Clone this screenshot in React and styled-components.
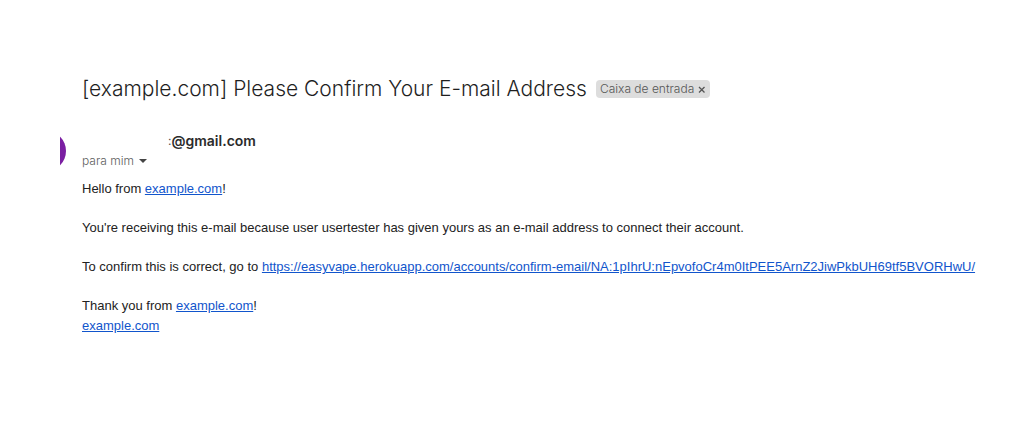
import React from "react";
import styled, { createGlobalStyle } from "styled-components";

const GlobalStyle = createGlobalStyle`
  * { box-sizing: border-box; }
  body { margin: 0; background: #fff; color: #222; font-family: "Liberation Sans", Arial, sans-serif; }
`;

const Message = styled.main`
  padding: 74px 24px 40px 60px;
`;

const Header = styled.header`
  display: flex;
  align-items: center;
  gap: 9px;
  padding-left: 22px;
`;

const Subject = styled.h1`
  margin: 0;
  font: 300 21px/30px Inter, sans-serif;
  color: #1f1f1f;
`;

const Label = styled.span`
  display: flex;
  align-items: center;
  gap: 3px;
  height: 18px;
  padding: 0 4px;
  border-radius: 4px;
  background: #ddd;
  color: #555;
  font: 300 12px/18px Inter, sans-serif;
`;

const RemoveButton = styled.button`
  display: flex;
  padding: 1px 0 0;
  border: 0;
  background: none;
  color: inherit;
`;

const SenderBlock = styled.section`
  display: flex;
  gap: 16px;
  margin-top: 27px;
`;

const Avatar = styled.div`
  width: 6px;
  height: 40px;
  overflow: hidden;
  display: flex;
  justify-content: flex-end;

  svg { flex: none; }
`;

const SenderInfo = styled.div`
  display: flex;
  flex-direction: column;
`;

const Sender = styled.strong`
  display: flex;
  padding-left: 86px;
  font: 600 14px/20px Inter, sans-serif;
  color: #2b2b2b;
`;

const Separator = styled.span`
  color: #555;
  font-size: 12px;
  font-weight: 400;
`;

const Recipient = styled.button`
  display: flex;
  align-items: center;
  gap: 5px;
  padding: 0;
  border: 0;
  background: none;
  color: #5e5e5e;
  font: 300 12px/20px Inter, sans-serif;
`;

const Body = styled.article`
  padding: 8px 0 0 22px;
  font-size: 13px;
  line-height: 20px;
`;

const Paragraph = styled.p`
  margin: 0 0 19px;
`;

const Link = styled.a`
  color: #15c;
  text-decoration: underline;
  overflow-wrap: anywhere;
`;

const confirmUrl =
  "https://easyvape.herokuapp.com/accounts/confirm-email/NA:1pIhrU:nEpvofoCr4m0ItPEE5ArnZ2JiwPkbUH69tf5BVORHwU/";

export default function App() {
  return (
    <>
      <GlobalStyle />
      <Message>
        <Header>
          <Subject>[example.com] Please Confirm Your E-mail Address</Subject>
          <Label>
            Caixa de entrada
            <RemoveButton aria-label="Remover">
              <svg width="9" height="9" viewBox="0 0 9 9" stroke="currentColor" strokeWidth="1.3">
                <path d="M2 2l5.500 5.500M7.500 2l-5.500 5.500" />
              </svg>
            </RemoveButton>
          </Label>
        </Header>
        <SenderBlock>
          <Avatar>
            <svg width="40" height="40" viewBox="0 0 40 40">
              <circle cx="20" cy="20" r="20" fill="#7b1fa2" />
            </svg>
          </Avatar>
          <SenderInfo>
            <Sender>
              <Separator>:</Separator>@gmail.com
            </Sender>
            <Recipient>
              para mim
              <svg width="8" height="4" viewBox="0 0 8 4" fill="#444">
                <path d="M0 0h8L4 4z" />
              </svg>
            </Recipient>
          </SenderInfo>
        </SenderBlock>
        <Body>
          <Paragraph>
            Hello from <Link href="#">example.com</Link>!
          </Paragraph>
          <Paragraph>
            You're receiving this e-mail because user usertester has given yours as an e-mail address to connect their account.
          </Paragraph>
          <Paragraph>
            To confirm this is correct, go to <Link href="#">{confirmUrl}</Link>
          </Paragraph>
          <Paragraph>
            Thank you from <Link href="#">example.com</Link>!
            <br />
            <Link href="#">example.com</Link>
          </Paragraph>
        </Body>
      </Message>
    </>
  );
}
